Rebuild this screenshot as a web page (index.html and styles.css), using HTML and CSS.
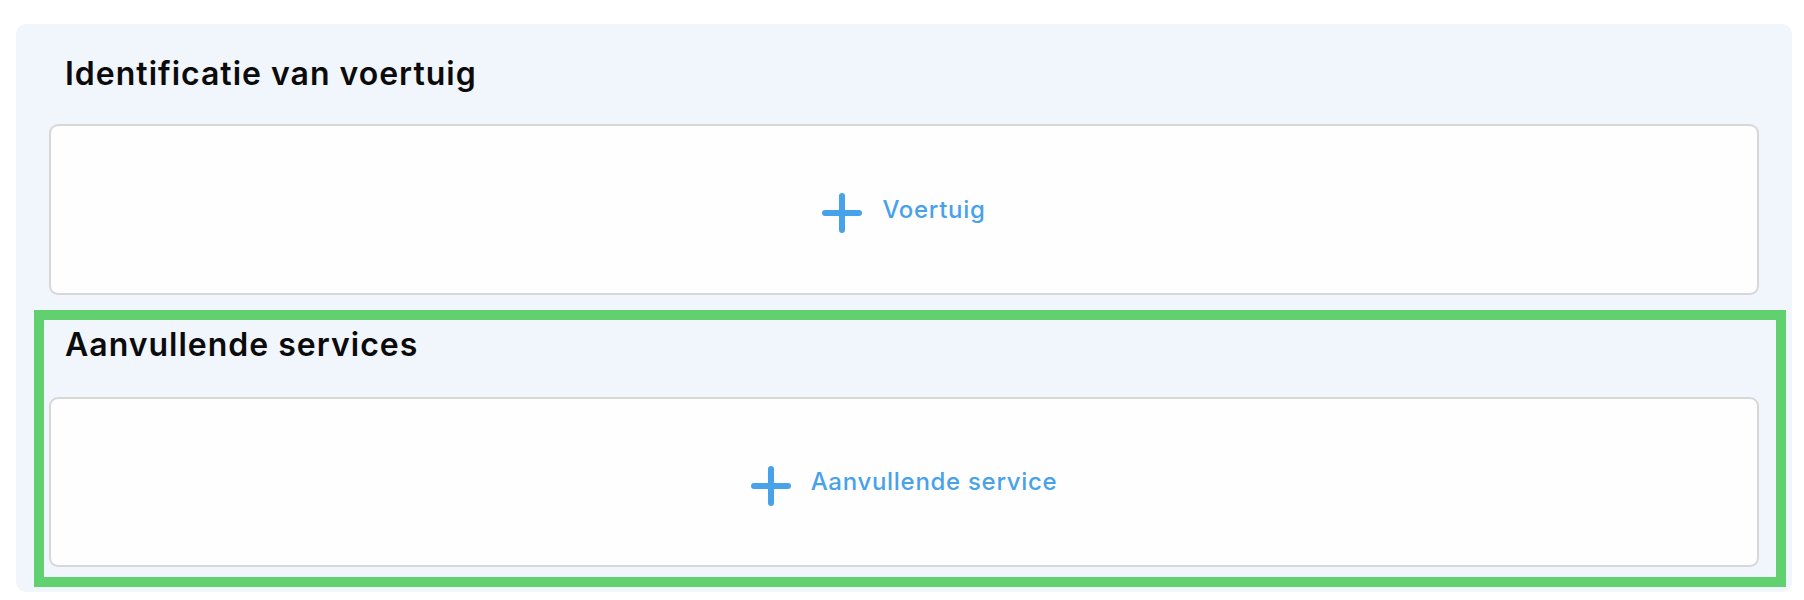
FILE: index.html
```html
<!DOCTYPE html>
<html lang="nl">
<head>
<meta charset="utf-8">
<title>Voertuig</title>
<link rel="stylesheet" href="styles.css">
</head>
<body>
<div class="panel">
  <section class="section">
    <h2 class="section-title">Identificatie van voertuig</h2>
    <div class="add-card">
      <button class="add-btn" type="button">
        <svg class="plus" viewBox="0 0 40 40" width="40" height="40" aria-hidden="true"><path d="M3 20H37M20 3V37" stroke="currentColor" stroke-width="6" stroke-linecap="round" fill="none"/></svg>
        <span class="add-label">Voertuig</span>
      </button>
    </div>
  </section>
  <section class="section section-second">
    <div class="highlight"></div>
    <h2 class="section-title title-second">Aanvullende services</h2>
    <div class="add-card card-second">
      <button class="add-btn" type="button">
        <svg class="plus" viewBox="0 0 40 40" width="40" height="40" aria-hidden="true"><path d="M3 20H37M20 3V37" stroke="currentColor" stroke-width="6" stroke-linecap="round" fill="none"/></svg>
        <span class="add-label">Aanvullende service</span>
      </button>
    </div>
  </section>
</div>
</body>
</html>
```

FILE: styles.css
```css
* { box-sizing: border-box; }
html, body { margin: 0; padding: 0; background: #ffffff; }
body { font-family: Inter, "Open Sans", sans-serif; }

.panel {
  margin: 24px 0 0 16px;
  width: 1776px;
  height: 568px;
  background: #f1f6fd;
  border-radius: 10px;
  padding: 30px 33px 25px 33px;
}

.section { position: relative; }
.section-second { margin-top: 30px; }

.section-title {
  margin: 0 0 30px 16px;
  font-size: 32px;
  line-height: 40px;
  font-weight: 600;
  letter-spacing: 1px;
  color: #0b0b0b;
}
.title-second { margin-bottom: 32px; }

.add-card {
  height: 171px;
  background: #fefefe;
  border: 2px solid #d7d7d7;
  border-radius: 9px;
  display: flex;
  align-items: center;
  justify-content: center;
}
.card-second { height: 170px; }

.add-btn {
  display: flex;
  align-items: center;
  gap: 20px;
  background: none;
  border: 0;
  padding: 0;
  color: #48a2ea;
  font-family: inherit;
  font-size: 24px;
  font-weight: 500;
  letter-spacing: 0.7px;
  cursor: pointer;
}
.plus { display: block; margin-top: 7px; }
.add-label { line-height: 30px; }

.highlight {
  position: absolute;
  left: -15px;
  right: -27px;
  top: -15px;
  bottom: -20px;
  border: 10px solid #61d170;
  pointer-events: none;
}
```
